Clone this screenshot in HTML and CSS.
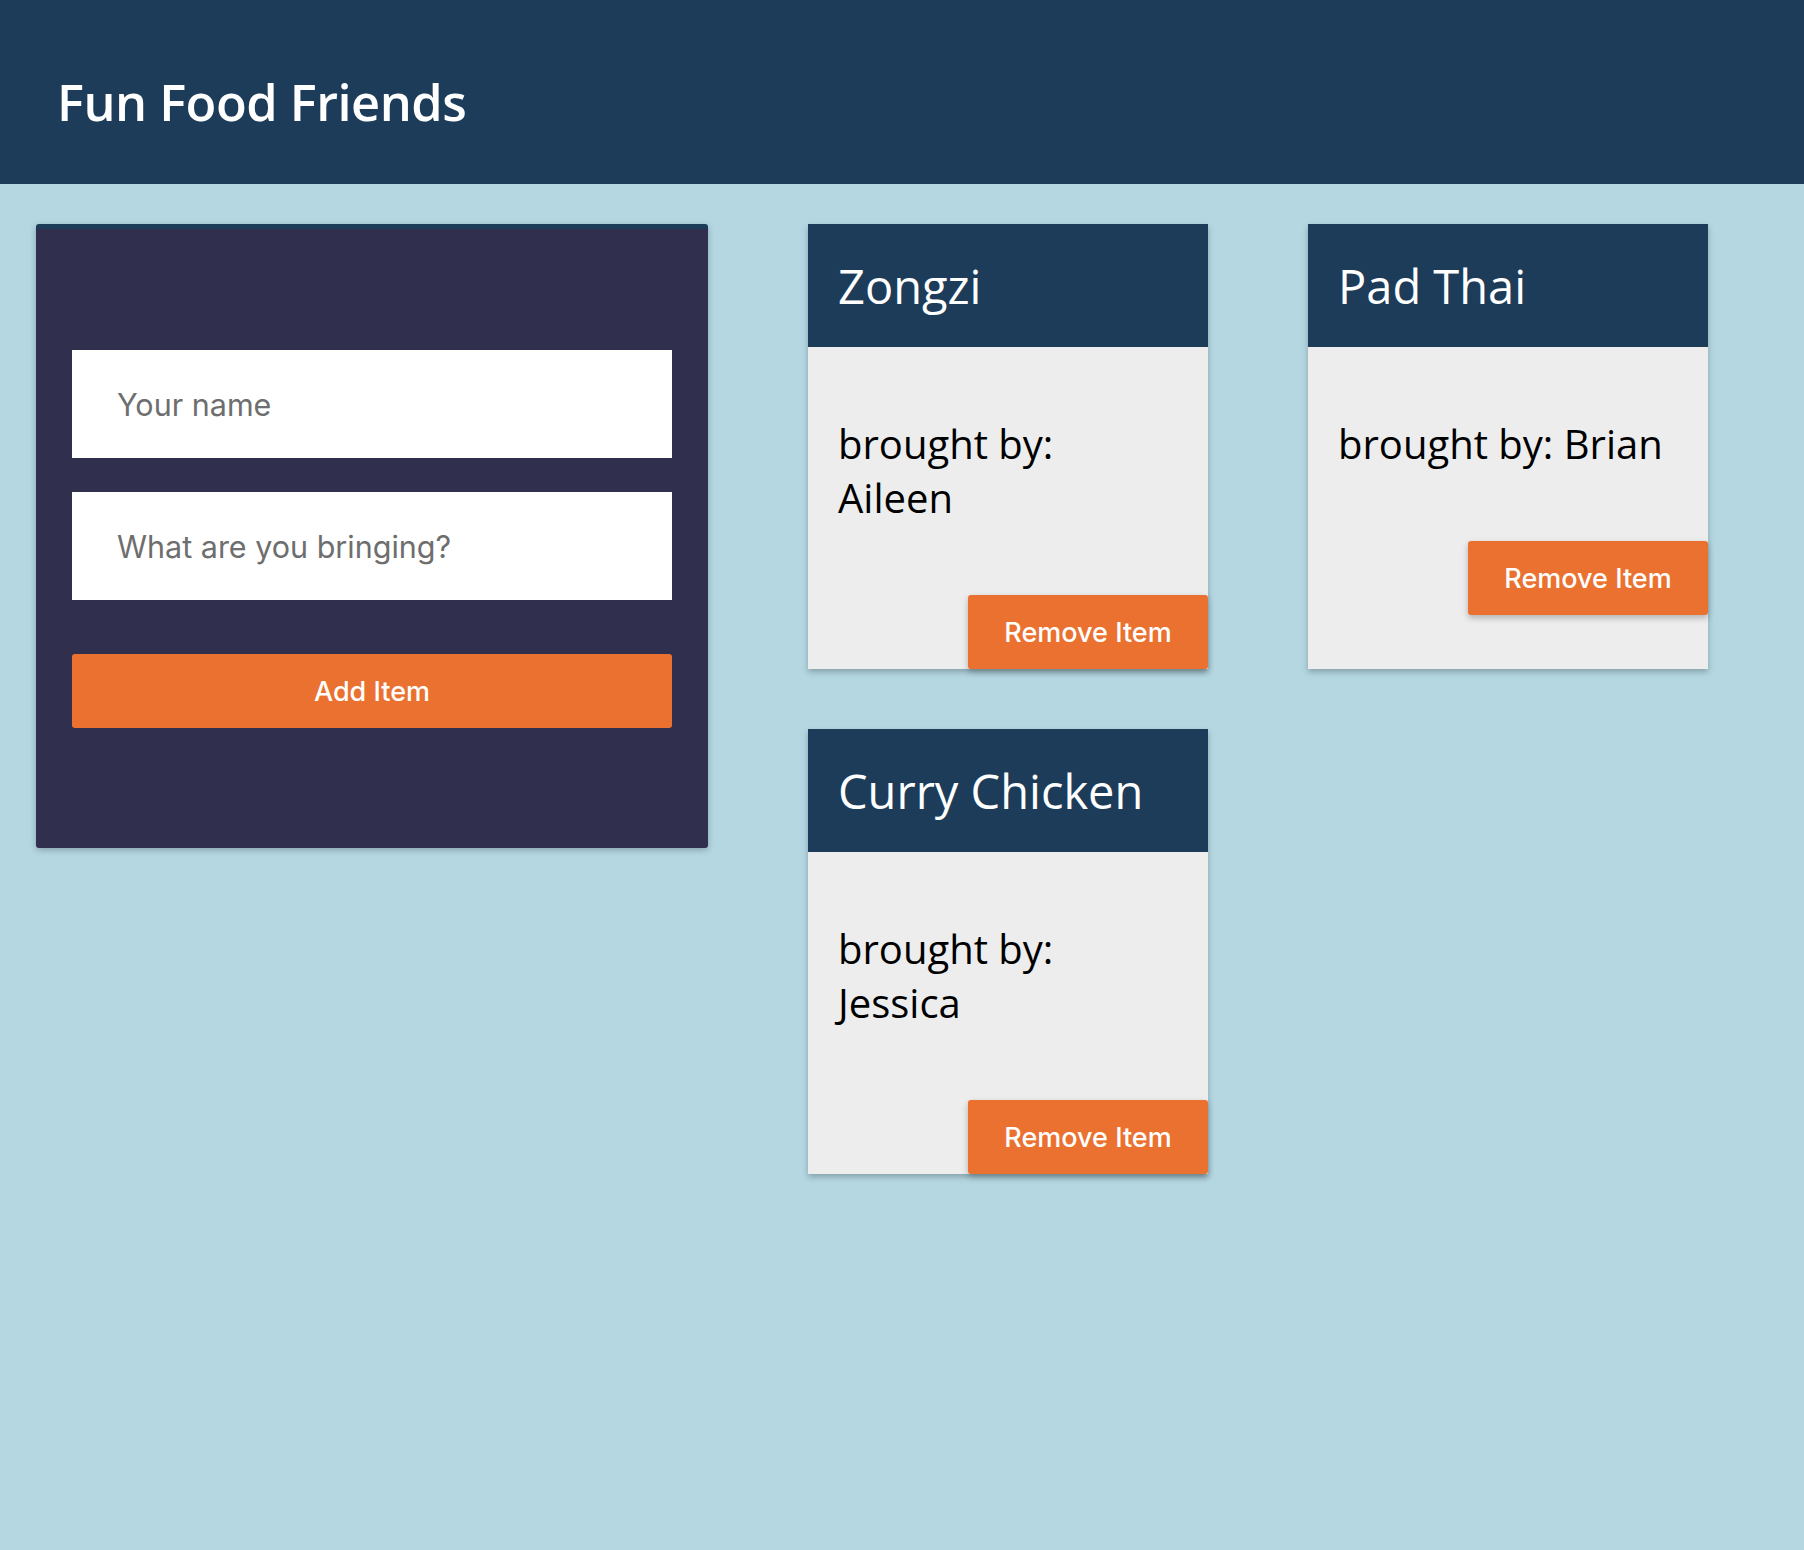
FILE: index.html
```html
<!DOCTYPE html>
<html lang="en">
<head>
<meta charset="utf-8">
<title>Fun Food Friends</title>
<link rel="stylesheet" href="styles.css">
</head>
<body>
<header class="top-bar">
  <h1 class="brand">Fun Food Friends</h1>
</header>
<main class="page">
  <section class="add-item">
    <form class="add-form">
      <input class="field" type="text" name="username" placeholder="Your name">
      <input class="field" type="text" name="currentItem" placeholder="What are you bringing?">
      <button class="btn btn-add" type="button">Add Item</button>
    </form>
  </section>
  <section class="items">
    <article class="card">
      <h3 class="card-title">Zongzi</h3>
      <div class="card-body">
        <p class="card-text">brought by: Aileen</p>
        <button class="btn btn-remove" type="button">Remove Item</button>
      </div>
    </article>
    <article class="card">
      <h3 class="card-title">Pad Thai</h3>
      <div class="card-body">
        <p class="card-text">brought by: Brian</p>
        <button class="btn btn-remove" type="button">Remove Item</button>
      </div>
    </article>
    <article class="card">
      <h3 class="card-title">Curry Chicken</h3>
      <div class="card-body">
        <p class="card-text">brought by: Jessica</p>
        <button class="btn btn-remove" type="button">Remove Item</button>
      </div>
    </article>
  </section>
</main>
</body>
</html>
```
FILE: styles.css
```css
* { box-sizing: border-box; }

html, body {
  margin: 0;
  padding: 0;
}

body {
  background: #b4d7e2;
  font-family: "Open Sans", "Noto Sans", sans-serif;
  min-height: 1550px;
}

.top-bar {
  background: #1d3c5a;
  height: 184px;
  display: flex;
  align-items: center;
  padding: 20px 0 0 57px;
}

.brand {
  margin: 0;
  color: #fff;
  font-size: 50.5px;
  font-weight: 600;
  line-height: 1;
  letter-spacing: -0.5px;
}

.page {
  display: flex;
  align-items: flex-start;
  padding: 40px 0 0 36px;
  gap: 100px;
}

.add-item {
  width: 672px;
  flex: none;
  background: #30304e;
  border-top: 5px solid #1d3c5a;
  border-radius: 3px;
  box-shadow: 0 2px 6px rgba(0, 0, 0, 0.25);
  padding: 121px 36px 120px 36px;
}

.add-form {
  display: flex;
  flex-direction: column;
}

.field {
  height: 108px;
  border: 0;
  background: #fff;
  padding: 0 45px;
  font-family: Inter, "Liberation Sans", sans-serif;
  font-size: 30.5px;
  color: #333;
  outline: none;
  margin-bottom: 34px;
}

.field::placeholder {
  color: #6e6e6e;
}

.field + .field { margin-bottom: 54px; }

.btn {
  border: 0;
  background: #eb7130;
  color: #fff;
  font-family: Inter, "Liberation Sans", sans-serif;
  font-size: 27px;
  font-weight: 500;
  border-radius: 3px;
  cursor: pointer;
}

.btn-add {
  height: 74px;
  width: 100%;
}

.items {
  display: grid;
  grid-template-columns: repeat(2, 400px);
  column-gap: 100px;
  row-gap: 60px;
}

.card {
  background: #ededed;
  box-shadow: 0 3px 6px rgba(0, 0, 0, 0.25);
  display: flex;
  flex-direction: column;
}

.card-title {
  margin: 0;
  background: #1d3c5a;
  color: #fff;
  height: 123px;
  display: flex;
  align-items: center;
  padding: 0 30px;
  font-size: 47px;
  font-weight: 400;
}

.card-body {
  display: flex;
  flex-direction: column;
  align-items: flex-end;
}

.card-text {
  align-self: stretch;
  margin: 70px 0;
  padding: 0 30px;
  font-size: 40px;
  line-height: 54px;
  color: #000;
}

.btn-remove {
  height: 74px;
  width: 240px;
  box-shadow: 0 3px 6px rgba(0, 0, 0, 0.25);
}
```
